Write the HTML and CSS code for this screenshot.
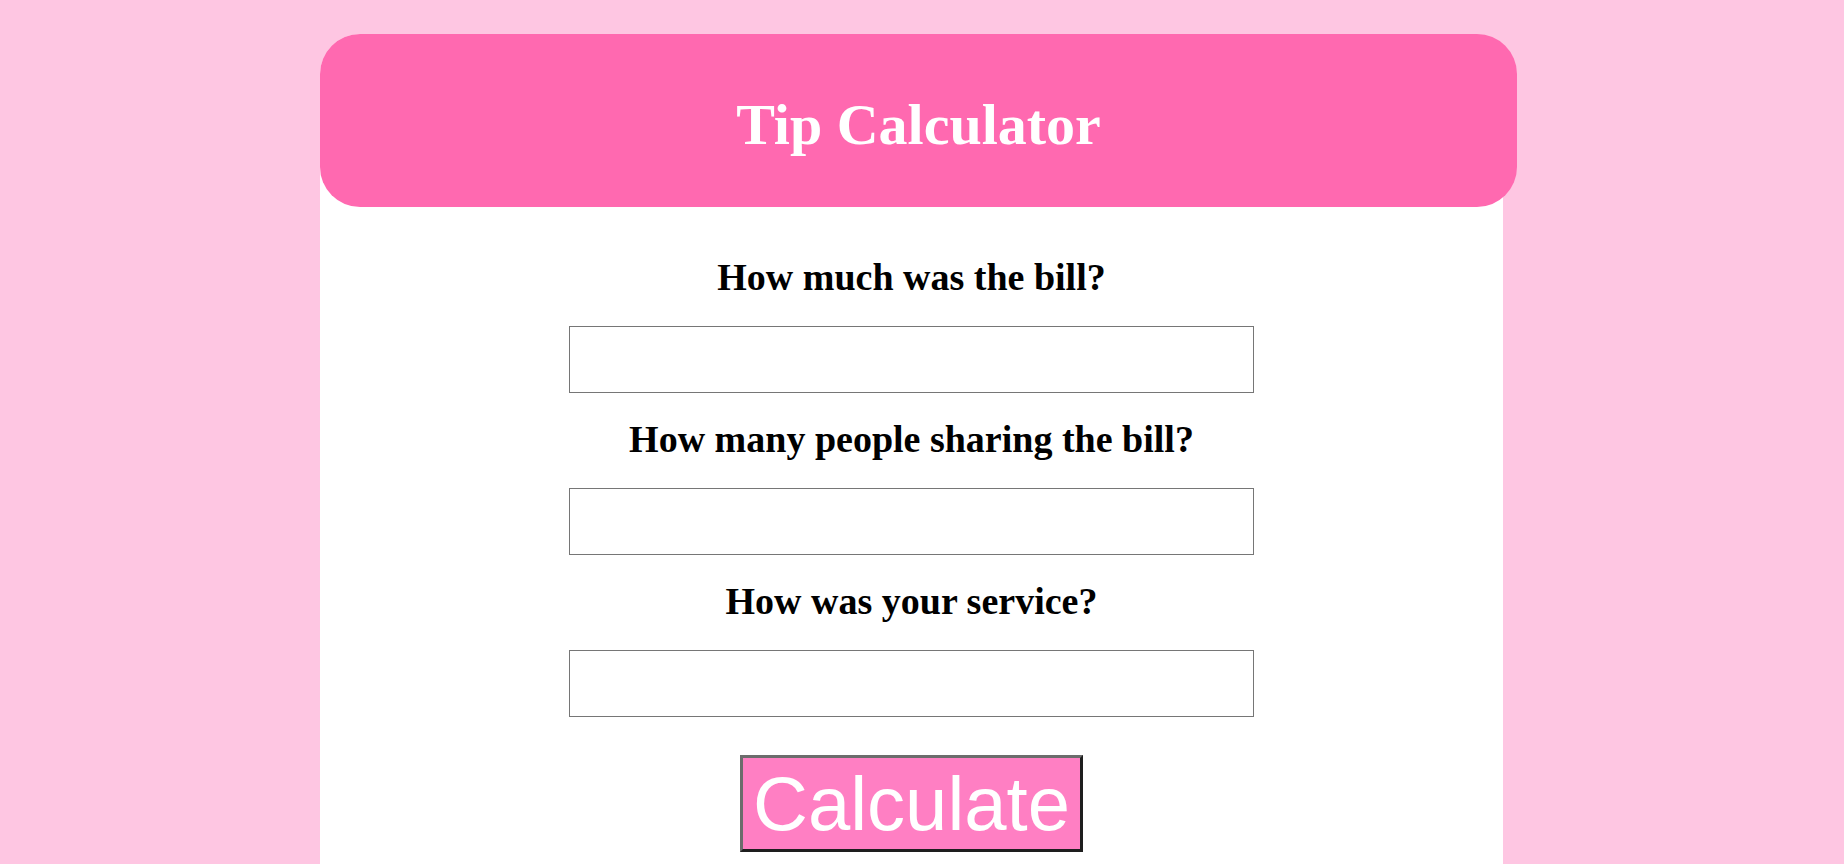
FILE: index.html
```html
<!DOCTYPE html>
<html lang="en">
<head>
<meta charset="utf-8">
<title>Tip Calculator</title>
<link rel="stylesheet" href="styles.css">
</head>
<body>
  <div class="card">
    <header class="card-header">
      <h1 class="title">Tip Calculator</h1>
    </header>
    <form class="form">
      <label class="label" for="bill">How much was the bill?</label>
      <input class="field" id="bill" type="text">
      <label class="label" for="people">How many people sharing the bill?</label>
      <input class="field" id="people" type="text">
      <label class="label" for="service">How was your service?</label>
      <input class="field" id="service" type="text">
      <button class="calc-btn" type="button">Calculate</button>
    </form>
  </div>
</body>
</html>
```

FILE: styles.css
```css
html, body {
  margin: 0;
  padding: 0;
}

body {
  background: #fec6e2;
  font-family: "Liberation Serif", "Times New Roman", serif;
  overflow: hidden;
}

.card {
  width: 1183px;
  margin: 34px 0 0 320px;
  background: #ffffff;
  border-radius: 40px 40px 0 0;
  padding-bottom: 60px;
}

.card-header {
  width: 1197px;
  height: 173px;
  box-sizing: border-box;
  padding-top: 8px;
  background: #ff69b0;
  border-radius: 40px;
  display: flex;
  align-items: center;
  justify-content: center;
}

.title {
  margin: 0;
  font-size: 58px;
  font-weight: bold;
  color: #ffffff;
  line-height: normal;
}

.form {
  display: flex;
  flex-direction: column;
  align-items: center;
  padding-top: 48px;
}

.label {
  display: block;
  font-size: 38px;
  font-weight: bold;
  line-height: 44px;
  color: #000000;
  margin-bottom: 27px;
  text-align: center;
}

.field {
  box-sizing: border-box;
  width: 685px;
  height: 67px;
  margin: 0 0 24px 0;
  border: 1px solid #767676;
  background: #ffffff;
  padding: 0 4px;
}

.field:last-of-type {
  margin-bottom: 38px;
}

.calc-btn {
  font-family: "Liberation Sans", Arial, sans-serif;
  font-size: 76px;
  line-height: 87px;
  color: #ffffff;
  background: #ff7fc3;
  padding: 2px 10px;
  border-style: solid;
  border-width: 3px;
  border-color: #6c6c6c #1e1e1e #1e1e1e #6c6c6c;
  margin: 0;
  cursor: pointer;
}
```
